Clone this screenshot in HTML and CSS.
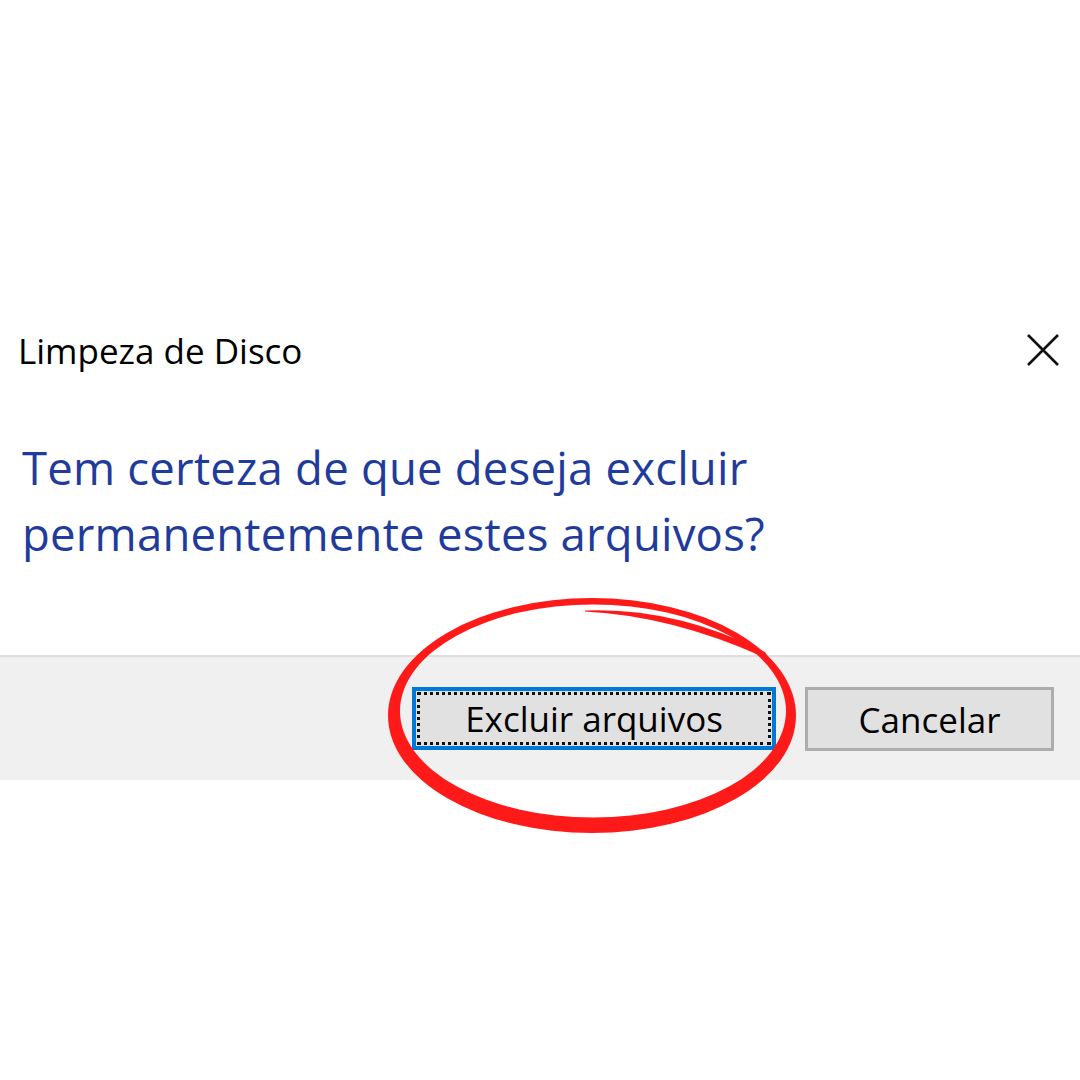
FILE: index.html
```html
<!DOCTYPE html>
<html lang="pt">
<head>
<meta charset="utf-8">
<title>Limpeza de Disco</title>
<link rel="stylesheet" href="styles.css">
</head>
<body>
<div class="page">
  <div class="dialog">
    <div class="titlebar">
      <span class="title">Limpeza de Disco</span>
      <svg class="close" width="34" height="34" viewBox="0 0 34 34" aria-hidden="true">
        <path d="M2 2 L32 32 M32 2 L2 32" stroke="#111" stroke-width="2.6" fill="none"/>
      </svg>
    </div>
    <div class="content">
      <p class="instruction">Tem certeza de que deseja excluir<br>permanentemente estes arquivos?</p>
    </div>
    <div class="footer">
      <button class="btn primary"><span class="focus">Excluir arquivos</span></button>
      <button class="btn">Cancelar</button>
    </div>
  </div>
  <svg class="annotation" width="1080" height="1080" viewBox="0 0 1080 1080" aria-hidden="true">
    <path fill="#ff1a1a" fill-rule="evenodd" d="M388 715.5 A204 117.5 0 1 0 796 715.5 A204 117.5 0 1 0 388 715.5 Z M400 711 A193 106.5 0 1 0 786 711 A193 106.5 0 1 0 400 711 Z"/>
    <path fill="#ff1a1a" d="M585 610.5 Q675 607 765 652 L770 660 Q675 616 585 611.5 Z"/>
  </svg>
</div>
</body>
</html>
```

FILE: styles.css
```css
html, body {
  margin: 0;
  padding: 0;
  background: #ffffff;
}

.page {
  position: relative;
  width: 1080px;
  height: 1080px;
  overflow: hidden;
}

.dialog {
  display: flex;
  flex-direction: column;
  padding-top: 326px;
  font-family: "Open Sans", "Noto Sans", "Liberation Sans", sans-serif;
}

.titlebar {
  display: flex;
  align-items: center;
  justify-content: space-between;
  height: 48px;
  padding: 0 20px 0 18px;
}

.title {
  font-size: 35px;
  color: #000;
}

.close {
  display: block;
}

.content {
  padding: 60px 0 0 22px;
  height: 281px;
  box-sizing: border-box;
}

.instruction {
  margin: 0;
  font-size: 45.5px;
  line-height: 66px;
  color: #1f3c9c;
  letter-spacing: 0.2px;
}

.footer {
  display: flex;
  justify-content: flex-end;
  gap: 29px;
  background: #f0f0f0;
  border-top: 2px solid #dfdfdf;
  height: 125px;
  box-sizing: border-box;
  padding: 30px 26px 0 0;
}

.btn {
  font-family: "Open Sans", "Noto Sans", "Liberation Sans", sans-serif;
  font-size: 35px;
  color: #000;
  background: #e1e1e1;
  border: 3px solid #adadad;
  height: 64px;
  margin: 0;
  padding: 0;
  width: 249px;
  box-sizing: border-box;
}

.btn.primary {
  width: 364px;
  height: 63px;
  border: 4px solid #0078d7;
  padding: 1px;
}

.focus {
  display: flex;
  align-items: center;
  justify-content: center;
  height: 100%;
  box-sizing: border-box;
  border: 3px dotted #111;
}

.annotation {
  position: absolute;
  left: 0;
  top: 0;
  pointer-events: none;
}
```
